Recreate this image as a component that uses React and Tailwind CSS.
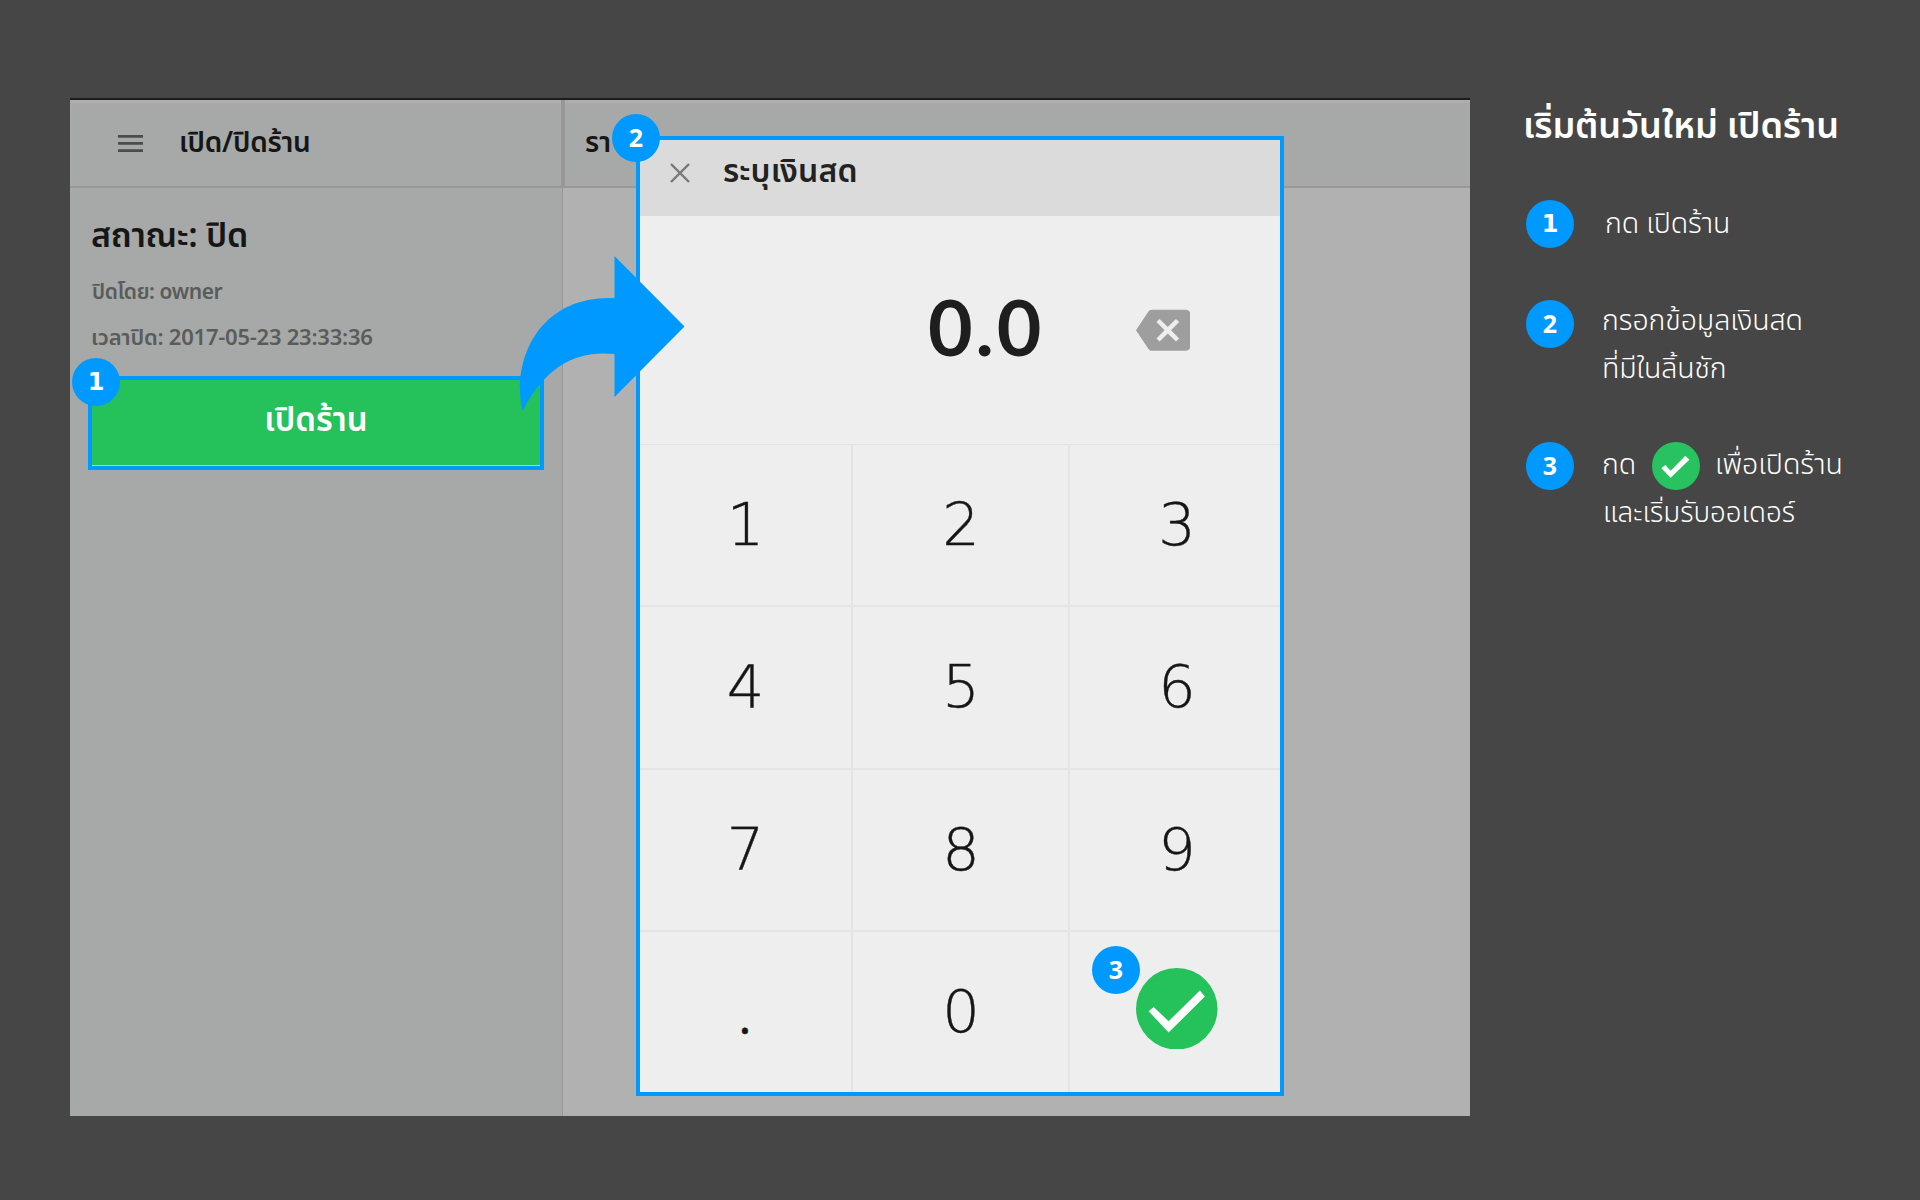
import React from 'react';
import { MdBackspace } from 'react-icons/md';

function Badge({ n, className = '' }) {
  return (
    <span
      className={`flex size-12 shrink-0 items-center justify-center rounded-full bg-[#0099ff] font-bold leading-none text-white ${
        n === 1 ? 'font-["DejaVu_Sans",sans-serif] text-[24px]' : 'pt-0.5 text-[25px]'
      } ${className}`}
    >
      {n}
    </span>
  );
}

function StatusPanel() {
  return (
    <div className="flex w-[493px] shrink-0 flex-col border-r border-[#989898] bg-[#a6a9a7] pt-[29px]">
      <h2 className="pl-[21px] text-[34px] font-semibold leading-[40px] tracking-[-0.3px] text-[#161616]">สถาณะ: ปิด</h2>
      <p className="mt-[21px] pl-[22px] text-[21px] font-semibold leading-[30px] tracking-[-0.4px] text-[#5a5c5b]">
        ปิดโดย: owner
      </p>
      <p className="mt-[16px] pl-[21px] text-[22px] font-semibold leading-[30px] tracking-[-0.24px] text-[#5a5c5b]">
        เวลาปิด: 2017-05-23 23:33:36
      </p>
      <div className="relative mt-[22px] ml-[18px] w-[456px]">
        <button className="flex h-[94px] w-full items-center justify-center border-4 border-[#0099ff] bg-[#25c15b] pb-1 text-[33px] font-semibold leading-none text-white shadow-[inset_0_-1px_0_#a9d8b5]">
          เปิดร้าน
        </button>
        <Badge n={1} className="absolute -top-[18px] -left-4" />
      </div>
    </div>
  );
}

function Key({ children }) {
  return (
    <div className='flex items-center justify-center bg-[#eeeeee] pb-[2px] font-["DejaVu_Sans",sans-serif] text-[59px] font-extralight leading-none text-[#161616] [-webkit-text-stroke:0.4px_#161616] nth-[3n]:pl-1 nth-[3n+2]:pl-px'>
      {children}
    </div>
  );
}

function CashDialog() {
  return (
    <div className="absolute top-[36px] left-[566px] flex h-[960px] w-[648px] flex-col border-4 border-[#0099ff] bg-[#eeeeee]">
      <div className="flex h-[76px] shrink-0 items-center bg-[#dbdbdb] pb-[11px] pl-[30px]">
        <svg viewBox="0 0 20 20" className="size-5 text-[#777777]" fill="none" stroke="currentColor" strokeWidth="2.4">
          <path d="M1 1L19 19M19 1L1 19" />
        </svg>
        <h3 className="ml-[33px] pb-[2px] text-[32px] font-semibold leading-none tracking-[0.1px] text-[#222222]">
          ระบุเงินสด
        </h3>
      </div>
      <div className="flex h-[229px] shrink-0 items-center justify-end border-b border-[#e2e2e2] pr-[90px]">
        <span className='-mt-[7px] mr-[91px] font-["Lato",sans-serif] text-[77px] font-bold leading-none tracking-[3px] text-[#1e1e1e]'>
          0.0
        </span>
        <MdBackspace className="size-[54.5px] text-[#9e9e9e]" />
      </div>
      <div className="grid grid-cols-[211px_215px_210px] grid-rows-[160px_161px_160px_160px] gap-0.5 bg-[#e4e4e4]">
        {['1', '2', '3', '4', '5', '6', '7', '8', '9'].map((d) => (
          <Key key={d}>{d}</Key>
        ))}
        <Key>
          <span className='pt-[18px] pr-px font-["Noto_Sans_Thai",sans-serif] text-[46px] font-normal'>.</span>
        </Key>
        <Key>0</Key>
        <Key>
          <svg viewBox="0 0 245 245" className="mb-[5px] size-[81.5px]">
            <circle cx="122.5" cy="122.5" r="122.5" fill="#25c15b" />
            <path d="M38 130L53 117L98 160L192 68L207 86L98 194Z" fill="#fff" />
          </svg>
        </Key>
      </div>
      <Badge n={2} className="absolute -top-[26px] -left-7" />
      <Badge n={3} className="absolute top-[806px] left-[452px]" />
    </div>
  );
}

function Screen() {
  return (
    <div className="relative mt-[98px] ml-[70px] flex h-[1018px] w-[1400px] shrink-0 flex-col border-t-2 border-[#1c1c1c] bg-[#b1b1b1]">
      <div className="flex h-[88px] shrink-0 border-b-2 border-[#989898] bg-[#a6a9a7] shadow-[inset_0_3px_3px_#afafaf]">
        <div className="flex w-[495px] items-center border-r-4 border-[#999796] pl-12">
          <svg viewBox="0 0 25 17" className="mt-px h-[17px] w-[25px]" fill="#4b4c4c">
            <path d="M0 0h25v2.7H0zM0 7.1h25v2.7H0zM0 14.3h25v2.7H0z" />
          </svg>
          <h1 className="ml-[36px] pt-[2px] text-[28px] font-semibold leading-none tracking-[-0.25px] text-[#161616]">
            เปิด/ปิดร้าน
          </h1>
        </div>
        <div className="flex items-center pt-[2px] pl-5 text-[28px] font-semibold leading-none text-[#161616]">รา</div>
      </div>
      <div className="flex grow">
        <StatusPanel />
      </div>
      <CashDialog />
      <svg viewBox="0 0 166 157" className="absolute top-[155px] left-[449px] h-[157px] w-[166px]" fill="#0099ff">
        <path d="M95.5 1L165.5 71.5L95.5 142V99C59 95 27 110 3.5 156C-8 105 20 40 95.5 43Z" />
      </svg>
    </div>
  );
}

function Guide() {
  return (
    <div className="flex flex-col pt-[100px] pl-[53px] text-[28.5px] font-light leading-[48px] text-white">
      <h1 className="text-[36px] font-semibold leading-[54px] tracking-[-0.13px] whitespace-nowrap">เริ่มต้นวันใหม่ เปิดร้าน</h1>
      <div className="mt-[46px] ml-[3px] flex">
        <Badge n={1} />
        <p className="ml-[31px] pt-px leading-[48px] tracking-[-0.15px]">กด เปิดร้าน</p>
      </div>
      <div className="mt-[51px] ml-[3px] flex">
        <Badge n={2} />
        <div className="-mt-[2px] ml-[28px]">
          <p className="tracking-[-0.05px]">กรอกข้อมูลเงินสด</p>
          <p className="tracking-[-0.15px]">ที่มีในลิ้นชัก</p>
        </div>
      </div>
      <div className="mt-[48px] ml-[3px] flex">
        <Badge n={3} />
        <div className="ml-[28px]">
          <div className="flex">
            <p className="w-[50px]">กด</p>
            <svg viewBox="0 0 144 144" className="size-12">
              <circle cx="72" cy="72" r="72" fill="#29c260" />
              <path d="M28 79L40 69L56 86L100 41L112 53L56 107Z" fill="#fff" />
            </svg>
            <p className="ml-[15px] whitespace-nowrap tracking-[-0.05px]">เพื่อเปิดร้าน</p>
          </div>
          <p className="pl-px text-[27.7px]">และเริ่มรับออเดอร์</p>
        </div>
      </div>
    </div>
  );
}

export default function App() {
  return (
    <main className='flex h-[1200px] w-[1920px] overflow-hidden bg-[#464646] font-["Noto_Sans_Thai","Noto_Sans",sans-serif]'>
      <Screen />
      <Guide />
    </main>
  );
}
